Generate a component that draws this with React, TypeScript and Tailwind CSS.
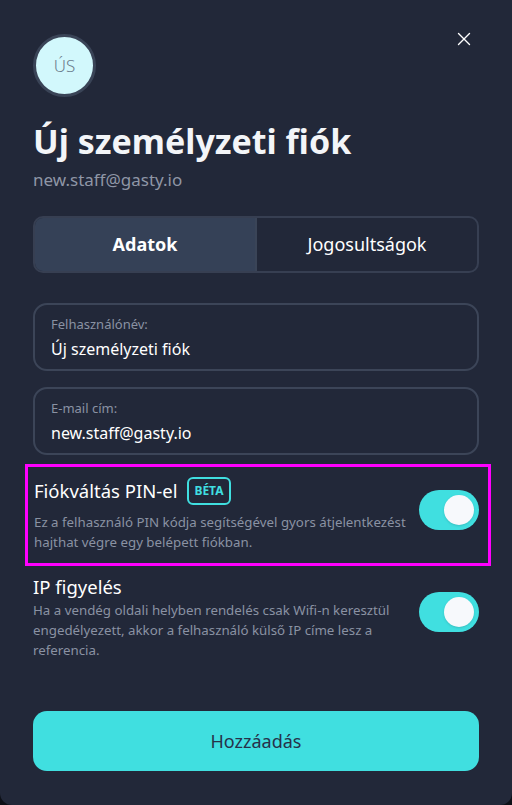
import { X } from "lucide-react";

function Toggle() {
  return (
    <div className="flex h-10 w-[60px] shrink-0 items-center justify-end rounded-full bg-[#40dfe0] px-[5px]">
      <div className="h-[30px] w-[30px] rounded-full bg-[#f7f9fc] shadow-sm" />
    </div>
  );
}

function Field({ label, value }: { label: string; value: string }) {
  return (
    <div className="flex h-[68px] flex-col justify-center rounded-[14px] border-2 border-[#3c4558] px-[16px]">
      <span className="text-[13px] leading-[18px] text-[#8a92a3]">{label}</span>
      <span className="mt-[5px] text-[16px] leading-[22px] text-white">{value}</span>
    </div>
  );
}

export default function App() {
  return (
    <div className="min-h-[805px] bg-[#0d1017]" style={{ fontFamily: '"Noto Sans", sans-serif' }}>
      <div className="relative flex h-[805px] flex-col rounded-b-[12px] bg-[#222839] px-[33px] pt-[34px]">
        <button className="absolute right-[37px] top-[28px] text-white" aria-label="Bezárás">
          <X size={22} strokeWidth={1.5} />
        </button>

        {/* avatar */}
        <div className="flex h-[63px] w-[63px] items-center justify-center rounded-full border-[3px] border-[#3a4457] bg-[#d2f8fc] text-[17px] font-light text-[#6b7c8c]">
          ÚS
        </div>

        <h1 className="mt-[21px] text-[34px] font-bold leading-[46px] text-[#f3f5f8]">Új személyzeti fiók</h1>
        <p className="mt-[4px] text-[17px] leading-[24px] text-[#8f96a6]">new.staff@gasty.io</p>

        {/* tabs */}
        <div className="mt-[24px] flex h-[57px] overflow-hidden rounded-[10px] border-2 border-[#373f52]">
          <div className="flex flex-1 items-center justify-center border-r-2 border-[#3a4457] bg-[#354157] text-[18px] font-bold text-white">
            Adatok
          </div>
          <div className="flex flex-1 items-center justify-center text-[18px] text-white">Jogosultságok</div>
        </div>

        <div className="mt-[30px] flex flex-col gap-[16px]">
          <Field label="Felhasználónév:" value="Új személyzeti fiók" />
          <Field label="E-mail cím:" value="new.staff@gasty.io" />
        </div>

        {/* highlighted row */}
        <div className="-ml-[8px] -mr-[12px] mt-[9px] flex items-start border-[3px] border-[#ff00ff] pb-[11px] pl-[6px] pr-[9px] pt-[10px]">
          <div className="flex-1 pr-[2px]">
            <div className="flex items-center gap-[10px]">
              <span className="text-[18.5px] leading-[26px] text-white">Fiókváltás PIN-el</span>
              <span className="rounded-[6px] border-2 border-[#40dfe0] px-[5px] py-[4px] text-[12px] font-bold leading-[16px] text-[#40dfe0]">
                BÉTA
              </span>
            </div>
            <p className="mt-[7px] text-[13.3px] leading-[20px] text-[#8a92a3]">
              Ez a felhasználó PIN kódja segítségével gyors átjelentkezést hajthat végre egy belépett fiókban.
            </p>
          </div>
          <div className="mt-[13px]">
            <Toggle />
          </div>
        </div>

        <div className="mt-[8px] flex items-start">
          <div className="flex-1 pr-[14px]">
            <span className="text-[18.5px] leading-[26px] text-white">IP figyelés</span>
            <p className="mt-0 text-[13.3px] leading-[20px] text-[#8a92a3]">
              Ha a vendég oldali helyben rendelés csak Wifi-n keresztül engedélyezett, akkor a felhasználó külső IP címe lesz a referencia.
            </p>
          </div>
          <div className="mt-[18px]">
            <Toggle />
          </div>
        </div>

        <button className="mt-auto mb-[34px] h-[60px] rounded-[14px] bg-[#40dfe0] text-[18px] text-[#27324a]">Hozzáadás</button>
      </div>
    </div>
  );
}
